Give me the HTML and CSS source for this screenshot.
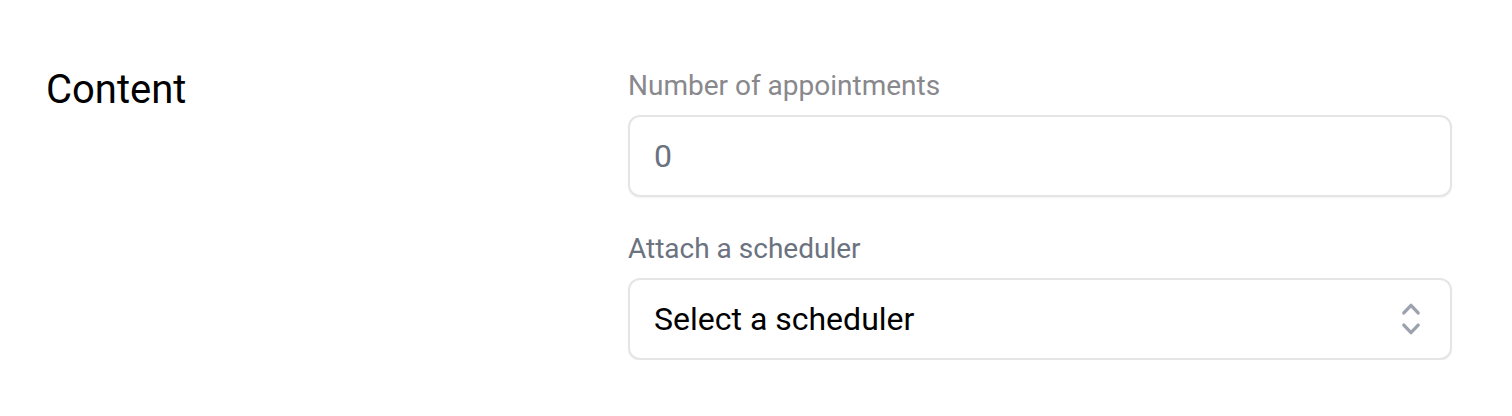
FILE: index.html
```html
<!DOCTYPE html>
<html lang="en">
<head>
  <meta charset="UTF-8">
  <title>Content</title>
  <link rel="stylesheet" href="styles.css">
</head>
<body>

<div class="section">
  <h2 class="section-title">Content</h2>

  <div class="fields">
    <!-- Campo numero de compromissos -->
    <div class="field">
      <label class="field-label muted" for="count">Number of appointments</label>
      <input class="field-input" id="count" type="text" value="0">
    </div>

    <!-- Lista de agendadores -->
    <div class="field">
      <label class="field-label">Attach a scheduler</label>
      <button class="field-select" type="button">
        <span>Select a scheduler</span>
        <svg class="select-icon" viewBox="0 0 20 20" fill="currentColor" aria-hidden="true">
          <path fill-rule="evenodd" d="M10 3a.75.75 0 01.55.24l3.25 3.5a.75.75 0 11-1.1 1.02L10 4.852 7.3 7.76a.75.75 0 01-1.1-1.02l3.25-3.5A.75.75 0 0110 3zm-3.76 9.2a.75.75 0 011.06.04l2.7 2.908 2.7-2.908a.75.75 0 111.1 1.02l-3.25 3.5a.75.75 0 01-1.1 0l-3.25-3.5a.75.75 0 01.04-1.06z" clip-rule="evenodd"/>
        </svg>
      </button>
    </div>
  </div>
</div>

</body>
</html>
```

FILE: styles.css
```css
body {
  margin: 0;
  background-color: #fff;
  font-family: Roboto, "Liberation Sans", sans-serif;
}
.section {
  display: grid;
  grid-template-columns: 582px 824px;
  padding: 66px 60px 0 46px;
}
.section-title {
  margin: 0;
  font-size: 40px;
  line-height: 48px;
  font-weight: 400;
  color: #000;
}
.fields {
  display: flex;
  flex-direction: column;
  gap: 32px;
}
.field {
  display: flex;
  flex-direction: column;
  gap: 9px;
}
.field-label {
  font-size: 28px;
  line-height: 40px;
  color: #6b7280;
}
.field-label.muted {
  color: #88888d;
}
.field-input, .field-select {
  box-sizing: border-box;
  width: 100%;
  height: 82px;
  margin: 0;
  padding: 0 24px;
  border: 2px solid #e5e5e7;
  border-radius: 12px;
  background-color: #fff;
  box-shadow: 0 1px 2px rgba(0, 0, 0, 0.05);
  font-family: inherit;
  font-size: 32px;
  line-height: 48px;
  outline: none;
}
.field-input {
  color: #6b7280;
}
.field-select {
  display: flex;
  align-items: center;
  justify-content: space-between;
  padding-right: 19px;
  color: #000;
  text-align: left;
  cursor: pointer;
}
.select-icon {
  width: 44px;
  height: 44px;
  margin-right: -2px;
  color: #9ca3af;
}
```
